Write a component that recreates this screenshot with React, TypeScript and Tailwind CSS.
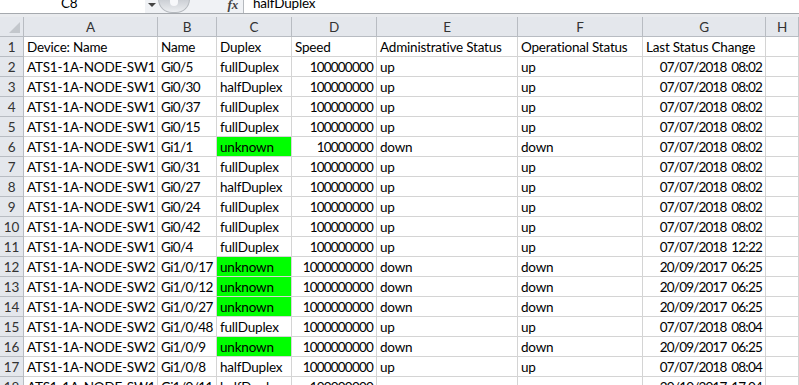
import React from 'react';

const cols = ['A', 'B', 'C', 'D', 'E', 'F', 'G', 'H'];
const template = 'grid grid-cols-[24px_134px_59px_75px_85px_141px_125px_123px_1fr]';

type Row = [string, string, string, string, string, string, string];

const SW1 = 'ATS1-1A-NODE-SW1';
const SW2 = 'ATS1-1A-NODE-SW2';

const rows: Row[] = [
    [SW1, 'Gi0/5', 'fullDuplex', '100000000', 'up', 'up', '07/07/2018 08:02'],
    [SW1, 'Gi0/30', 'halfDuplex', '100000000', 'up', 'up', '07/07/2018 08:02'],
    [SW1, 'Gi0/37', 'fullDuplex', '100000000', 'up', 'up', '07/07/2018 08:02'],
    [SW1, 'Gi0/15', 'fullDuplex', '100000000', 'up', 'up', '07/07/2018 08:02'],
    [SW1, 'Gi1/1', 'unknown', '10000000', 'down', 'down', '07/07/2018 08:02'],
    [SW1, 'Gi0/31', 'fullDuplex', '100000000', 'up', 'up', '07/07/2018 08:02'],
    [SW1, 'Gi0/27', 'halfDuplex', '100000000', 'up', 'up', '07/07/2018 08:02'],
    [SW1, 'Gi0/24', 'fullDuplex', '100000000', 'up', 'up', '07/07/2018 08:02'],
    [SW1, 'Gi0/42', 'fullDuplex', '100000000', 'up', 'up', '07/07/2018 08:02'],
    [SW1, 'Gi0/4', 'fullDuplex', '100000000', 'up', 'up', '07/07/2018 12:22'],
    [SW2, 'Gi1/0/17', 'unknown', '1000000000', 'down', 'down', '20/09/2017 06:25'],
    [SW2, 'Gi1/0/12', 'unknown', '1000000000', 'down', 'down', '20/09/2017 06:25'],
    [SW2, 'Gi1/0/27', 'unknown', '1000000000', 'down', 'down', '20/09/2017 06:25'],
    [SW2, 'Gi1/0/48', 'fullDuplex', '1000000000', 'up', 'up', '07/07/2018 08:04'],
    [SW2, 'Gi1/0/9', 'unknown', '1000000000', 'down', 'down', '20/09/2017 06:25'],
    [SW2, 'Gi1/0/8', 'halfDuplex', '1000000000', 'up', 'up', '07/07/2018 08:04'],
    [SW1, 'Gi1/0/11', 'halfDuplex', '100000000', 'up', 'up', '20/10/2017 17:04'],
];

const header: Row = ['Device: Name', 'Name', 'Duplex', 'Speed', 'Administrative Status', 'Operational Status', 'Last Status Change'];

function Cell({ children, right, green, tight }: { children?: React.ReactNode; right?: boolean; green?: boolean; tight?: boolean }) {
    return (
        <div
            className={`h-5 border-r border-b border-[#d4d4d4] px-[3px] overflow-hidden whitespace-nowrap leading-[21px] ${right ? 'text-right tracking-[-0.8px] [word-spacing:2px]' : ''} ${tight ? 'tracking-[-0.6px]' : ''} ${green ? 'bg-[#00ff00]' : ''}`}
        >
            {children}
        </div>
    );
}

function RowHead({ children }: { children: React.ReactNode }) {
    return (
        <div className="h-5 bg-[#e4e7ec] border-r border-b border-[#b8bcc2] text-center leading-[21px] text-[#333]">
            {children}
        </div>
    );
}

export default function App() {
    return (
        <div className="w-[799px] h-[385px] overflow-hidden bg-white text-[13.5px] tracking-[-0.2px] text-black font-['Lato',sans-serif]">
            {/* formula bar */}
            <div className="flex h-[14px] items-end border-b border-[#a5a9ae] bg-[#f0f2f5]">
                <div className="relative w-[145px] h-[13px] bg-white">
                    <span className="absolute left-[61px] -top-[7px] leading-[20px]">C8</span>
                </div>
                <div className="w-[13px] h-[13px] flex items-start justify-center pt-[3px]">
                    <div className="w-0 h-0 border-l-[4px] border-r-[4px] border-t-[4px] border-l-transparent border-r-transparent border-t-[#444]" />
                </div>
                <div className="w-[32px] h-[14px] rounded-b-full bg-gradient-to-b from-[#c9cdd2] to-[#eceef1] border border-t-0 border-[#b5b9be] flex justify-center">
                    <div className="w-[8px] h-[6px] mt-[1px] rounded-b-full bg-[#f7f8fa]" />
                </div>
                <div className="flex-1 h-[13px] relative">
                    <span className="absolute right-[5px] -top-[5px] italic font-['Liberation_Serif',serif] text-[13px] font-bold text-[#444]">fx</span>
                </div>
                <div className="relative w-[556px] h-[13px] bg-white border-l border-[#b5b9be]">
                    <span className="absolute left-[9px] -top-[7px] leading-[20px]">halfDuplex</span>
                </div>
            </div>
            <div className="h-[3px] bg-[#e9ebee]" />

            {/* column headers */}
            <div className={template}>
                <div className="h-5 bg-[#e4e7ec] border-r border-b border-[#b8bcc2] flex items-end justify-end p-[3px]">
                    <div className="w-0 h-0 border-l-[11px] border-b-[11px] border-l-transparent border-b-[#c3c7cc]" />
                </div>
                {cols.map((c) => (
                    <div key={c} className="h-5 bg-[#e4e7ec] border-r border-b border-[#b8bcc2] text-center leading-[21px] text-[#333] overflow-hidden">
                        {c}
                    </div>
                ))}
            </div>

            {/* header row */}
            <div className={template}>
                <RowHead>1</RowHead>
                {header.map((h, i) => (
                    <Cell key={i}>{h}</Cell>
                ))}
                <Cell />
            </div>

            {rows.map((r, i) => (
                <div key={i} className={template}>
                    <RowHead>{i + 2}</RowHead>
                    <Cell>{r[0]}</Cell>
                    <Cell tight>{r[1]}</Cell>
                    <Cell green={r[2] === 'unknown'}>{r[2]}</Cell>
                    <Cell right>{r[3]}</Cell>
                    <Cell>{r[4]}</Cell>
                    <Cell>{r[5]}</Cell>
                    <Cell right>{r[6]}</Cell>
                    <Cell />
                </div>
            ))}
        </div>
    );
}
